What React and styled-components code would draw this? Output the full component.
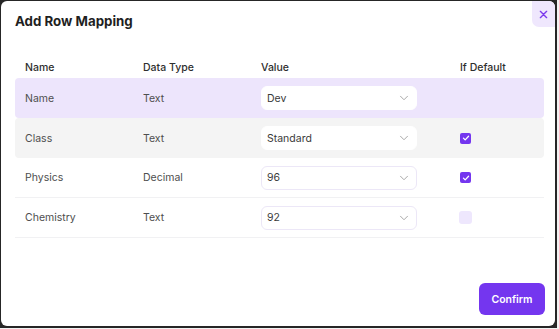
import React from "react";
import styled, { createGlobalStyle } from "styled-components";

const GlobalStyle = createGlobalStyle`
  html, body { margin: 0; padding: 0; }
  body {
    background: #f2f2f2;
    font-family: Inter, "Liberation Sans", sans-serif;
    -webkit-font-smoothing: antialiased;
  }
  * { box-sizing: border-box; }
`;

const Frame = styled.div`
  width: 557px;
  height: 328px;
  background: #262626;
  padding: 1px 2px 2px 1px;
`;

const Dialog = styled.div`
  position: relative;
  height: 100%;
  background: #ffffff;
  border-radius: 6px;
  display: flex;
  flex-direction: column;
  padding: 10px 11px 11px 14px;
`;

const Title = styled.h2`
  margin: 0;
  font-size: 13.3px;
  line-height: 20px;
  font-weight: 700;
  color: #1f1f1f;
`;

const CloseButton = styled.button`
  position: absolute;
  top: 0;
  right: 0;
  width: 23px;
  height: 26px;
  border: none;
  padding: 0;
  background: #efe7fd;
  border-radius: 0 6px 0 7px;
  color: #7c3aed;
  display: flex;
  align-items: center;
  justify-content: center;
  cursor: pointer;
`;

const Table = styled.div`
  margin-top: 25px;
  display: flex;
  flex-direction: column;
`;

const Row = styled.div`
  display: grid;
  grid-template-columns: 118px 118px 199px 1fr;
  align-items: center;
  height: ${(p) => (p.$head ? "22px" : "40px")};
  border-radius: ${(p) => (p.$bg ? "4px" : "0")};
  background: ${(p) => p.$bg || "transparent"};
  border-bottom: ${(p) => (p.$line ? "1px solid #f1f1f3" : "none")};
`;

const Cell = styled.div`
  padding-left: 10px;
  font-size: 10.5px;
  color: ${(p) => (p.$head ? "#2e2e2e" : "#4e4e4e")};
  font-weight: ${(p) => (p.$head ? 500 : 400)};
  white-space: nowrap;
`;

const Select = styled.div`
  width: 156px;
  height: 24px;
  background: #ffffff;
  border: 1px solid ${(p) => (p.$onTint ? "#ffffff" : "#ece7f7")};
  border-radius: 6px;
  display: flex;
  align-items: center;
  justify-content: space-between;
  padding: 0 5px 0 5px;
  font-size: 10.5px;
  color: #3a3a3a;
`;

const Chevron = () => (
  <svg width="14" height="14" viewBox="0 0 24 24" fill="none" stroke="#a3a3a3" strokeWidth="1.6" strokeLinecap="round" strokeLinejoin="round">
    <path d="m6 9 6 6 6-6" />
  </svg>
);

const Check = styled.div`
  width: ${(p) => (p.$on ? "11px" : "13px")};
  height: ${(p) => (p.$on ? "11px" : "13px")};
  margin-left: ${(p) => (p.$on ? "0" : "-1px")};
  border-radius: ${(p) => (p.$on ? "2px" : "3px")};
  background: ${(p) => (p.$on ? "#7436ef" : "#eee7fd")};
  display: flex;
  align-items: center;
  justify-content: center;
`;

const Footer = styled.div`
  margin-top: auto;
  display: flex;
  justify-content: flex-end;
  margin-right: -1px;
`;

const ConfirmButton = styled.button`
  width: 66px;
  height: 32px;
  border: none;
  border-radius: 6px;
  background: #7436ef;
  color: #ffffff;
  font-family: inherit;
  font-size: 10.5px;
  font-weight: 600;
  cursor: pointer;
`;

const rows = [
  { name: "Name", type: "Text", value: "Dev", check: null, bg: "#ede5fc" },
  { name: "Class", type: "Text", value: "Standard", check: true, bg: "#f4f4f4" },
  { name: "Physics", type: "Decimal", value: "96", check: true, line: true },
  { name: "Chemistry", type: "Text", value: "92", check: false, line: true },
];

export default function App() {
  return (
    <>
      <GlobalStyle />
      <Frame>
        <Dialog>
          <Title>Add Row Mapping</Title>
          <CloseButton aria-label="Close">
            <svg width="9" height="9" viewBox="0 0 10 10" fill="none" stroke="currentColor" strokeWidth="1.5" strokeLinecap="round">
              <path d="M1.5 1.5l7 7M8.5 1.5l-7 7" />
            </svg>
          </CloseButton>
          <Table>
            <Row $head>
              <Cell $head>Name</Cell>
              <Cell $head>Data Type</Cell>
              <Cell $head>Value</Cell>
              <Cell $head>If Default</Cell>
            </Row>
            {rows.map((r) => (
              <Row key={r.name} $bg={r.bg} $line={r.line}>
                <Cell>{r.name}</Cell>
                <Cell>{r.type}</Cell>
                <Cell>
                  <Select $onTint={!!r.bg}>
                    <span>{r.value}</span>
                    <Chevron />
                  </Select>
                </Cell>
                <Cell>
                  {r.check !== null && (
                    <Check $on={r.check}>
                      {r.check && (
                        <svg width="8" height="8" viewBox="0 0 10 10" fill="none" stroke="#ffffff" strokeWidth="1.6" strokeLinecap="round" strokeLinejoin="round">
                          <path d="M1.8 5.2l2.2 2.1 4.2-4.5" />
                        </svg>
                      )}
                    </Check>
                  )}
                </Cell>
              </Row>
            ))}
          </Table>
          <Footer>
            <ConfirmButton>Confirm</ConfirmButton>
          </Footer>
        </Dialog>
      </Frame>
    </>
  );
}
